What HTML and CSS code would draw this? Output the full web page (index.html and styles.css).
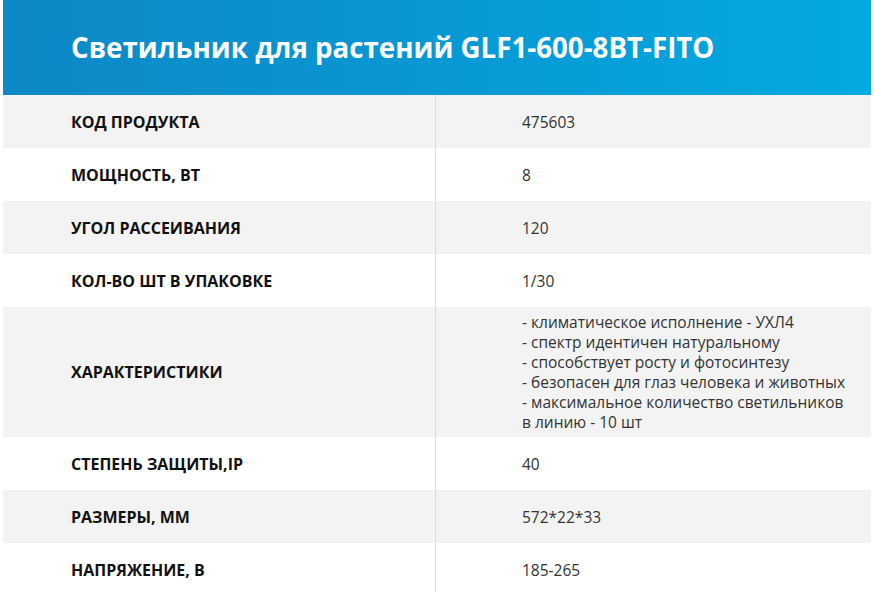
FILE: index.html
```html
<!DOCTYPE html>
<html lang="ru">
<head>
<meta charset="utf-8">
<title>Светильник для растений GLF1-600-8BT-FITO</title>
<link rel="stylesheet" href="styles.css">
</head>
<body>
<div class="card">
  <header class="head">
    <h1 class="title">Светильник для растений GLF1-600-8BT-FITO</h1>
  </header>
  <div class="specs">
    <div class="row alt"><div class="label">КОД ПРОДУКТА</div><div class="value">475603</div></div>
    <div class="row"><div class="label">МОЩНОСТЬ, ВТ</div><div class="value">8</div></div>
    <div class="row alt"><div class="label">УГОЛ РАССЕИВАНИЯ</div><div class="value">120</div></div>
    <div class="row"><div class="label">КОЛ-ВО ШТ В УПАКОВКЕ</div><div class="value">1/30</div></div>
    <div class="row alt tall"><div class="label">ХАРАКТЕРИСТИКИ</div><div class="value multi">- климатическое исполнение - УХЛ4<br>- спектр идентичен натуральному<br>- способствует росту и фотосинтезу<br>- безопасен для глаз человека и животных<br>- максимальное количество светильников<br>в линию - 10 шт</div></div>
    <div class="row"><div class="label">СТЕПЕНЬ ЗАЩИТЫ,IP</div><div class="value">40</div></div>
    <div class="row alt"><div class="label">РАЗМЕРЫ, ММ</div><div class="value">572*22*33</div></div>
    <div class="row"><div class="label">НАПРЯЖЕНИЕ, В</div><div class="value">185-265</div></div>
  </div>
</div>
</body>
</html>
```
FILE: styles.css
```css
html, body {
  margin: 0;
  padding: 0;
  background: #ffffff;
}
body {
  padding: 0 3px;
  font-family: "Open Sans", "Liberation Sans", sans-serif;
}
.card {
  width: 868px;
}
.head {
  height: 95px;
  background: linear-gradient(90deg, #0d88c5 0%, #0898d3 50%, #04aae2 100%);
  display: flex;
  align-items: center;
  padding-left: 68px;
  box-sizing: border-box;
}
.title {
  margin: 0;
  padding-bottom: 2px;
  color: #ffffff;
  font-family: "Open Sans", sans-serif;
  font-weight: 700;
  font-size: 27.7px;
  letter-spacing: 0;
}
.specs {
  display: flex;
  flex-direction: column;
}
.row {
  display: grid;
  grid-template-columns: 433px 1fr;
  height: 53px;
  background: #ffffff;
}
.row.alt {
  background: #f3f3f3;
}
.row.tall {
  height: 130px;
}
.label {
  display: flex;
  align-items: center;
  padding-left: 68px;
  border-right: 1px solid #dcdcdc;
  font-weight: 700;
  font-size: 16px;
  color: #111111;
}
.value {
  display: flex;
  align-items: center;
  padding-left: 86px;
  padding-right: 10px;
  font-size: 15.5px;
  color: #333333;
}
.value.multi {
  display: block;
  align-self: center;
  line-height: 20px;
  white-space: nowrap;
}
```
